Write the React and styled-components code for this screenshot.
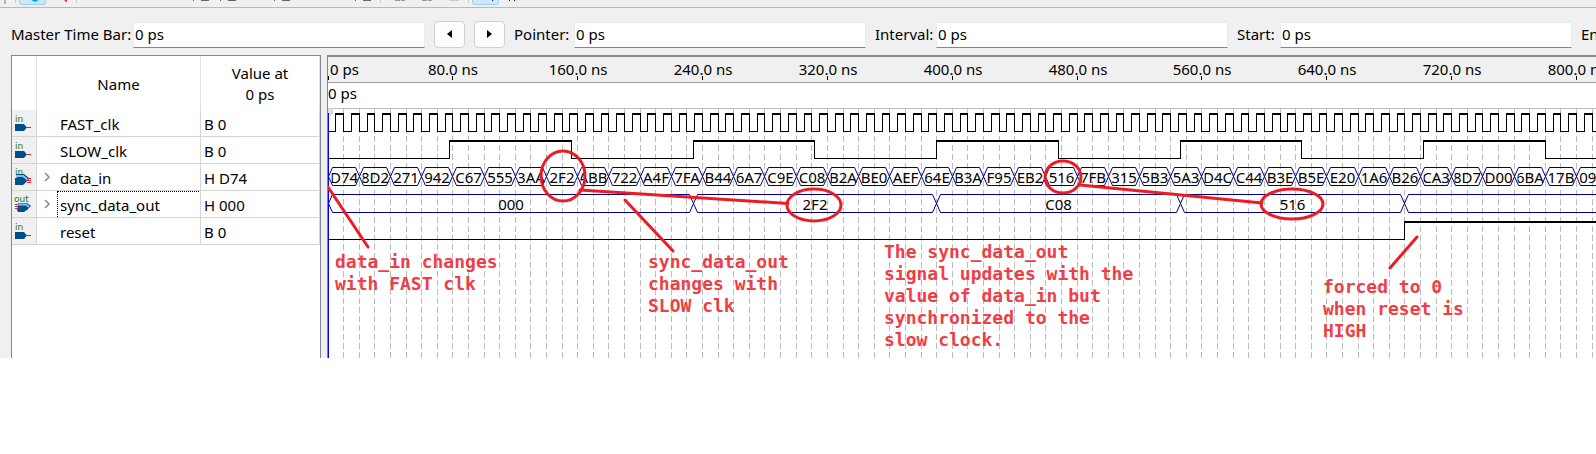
import React from "react";
import styled, { createGlobalStyle } from "styled-components";

const GlobalStyle = createGlobalStyle`
  * { box-sizing: border-box; }
  body {
    margin: 0;
    background: #fff;
    color: #000;
    font: 15px/21px "Noto Sans", "Open Sans", sans-serif;
  }
`;

/* ---------- page frame ---------- */

const Window = styled.main`
  background: #f0f0f0;
  overflow: hidden;
`;

const Toolbar = styled.div`
  display: flex;
  height: 8px;
  padding-left: 4px;
  border-bottom: 1px solid #b9b9b9;
  overflow: hidden;
`;

const Grip = styled.span`
  flex: none;
  width: 2px;
  height: 4px;
  margin-right: 6px;
  background: #b8b8b8;
`;

const Separator = styled.span`
  flex: none;
  width: 1px;
  height: 3px;
  margin: 0 3px;
  background: #c8c8c8;
`;

const ToolButton = styled.button`
  flex: none;
  width: 27px;
  height: 5px;
  padding: 0;
  border: 1px solid ${(p) => (p.$active ? "#99d1ff" : "transparent")};
  border-top: 0;
  border-radius: 0 0 3px 3px;
  background: ${(p) => (p.$active ? "#cce8ff" : "transparent")};
  svg { display: block; }
`;

const TimeBar = styled.form`
  display: flex;
  align-items: center;
  gap: 9px;
  height: 47px;
  padding: 6px 0 0 11px;
`;

const Field = styled.div`
  display: flex;
  flex: none;
  align-items: center;
`;

const FieldLabel = styled.label`
  width: ${(p) => p.$width}px;
  white-space: nowrap;
`;

const TimeInput = styled.input`
  width: 292px;
  height: 26px;
  padding: 0 1px 1px;
  border: 1px solid #ebebeb;
  border-bottom-color: #868686;
  border-radius: 1px;
  background: #fff;
  font: inherit;
`;

const StepButton = styled.button`
  flex: none;
  display: grid;
  place-items: center;
  width: 31px;
  height: 27px;
  padding: 0 0 2px;
  border: 1px solid #d0d0d0;
  border-radius: 4px;
  background: #fdfdfd;
`;

const Workspace = styled.div`
  display: flex;
  gap: 6px;
  padding-left: 11px;
`;

/* ---------- signal table ---------- */

const SignalPanel = styled.section`
  flex: none;
  width: 310px;
  border: 1px solid #828790;
  border-bottom: 0;
  background: #fff;
`;

const SignalTable = styled.table`
  width: 100%;
  table-layout: fixed;
  border-collapse: separate;
  border-spacing: 0;
`;

const HeadCell = styled.th`
  width: ${(p) => p.$width}px;
  height: 54px;
  padding: 2px 0 0;
  border-right: 1px solid #e2e2e2;
  font-weight: 400;
`;

const Cell = styled.td`
  height: 27px;
  padding: 0 0 0 ${(p) => p.$indent || 0}px;
  border-right: 1px solid #d5d5d5;
  border-bottom: 1px solid #d5d5d5;
  background: ${(p) => (p.$shaded ? "#f0f0f0" : "#fff")};
  white-space: nowrap;
  svg { display: block; }
`;

const NameLine = styled.div`
  display: flex;
  align-items: center;
`;

const Expander = styled.button`
  display: grid;
  place-items: center;
  width: 14px;
  height: 20px;
  margin: 0 3px;
  padding: 0;
  border: 0;
  background: none;
`;

const SignalName = styled.span`
  flex: 1;
  height: 26px;
  margin-right: 1px;
  padding: 3px 0 0 2px;
  border: 1px dotted transparent;
  border-width: 1px 0 0 1px;
  ${(p) => p.$focused && "border-color: #000;"}
`;

const Spacer = styled.span`
  width: 20px;
`;

const Value = styled.div`
  padding-top: 3px;
`;

/* ---------- waveform ---------- */

const WavePanel = styled.section`
  flex: 1;
  min-width: 0;
  border-left: 1px solid #828790;
  background: #fff;
`;

const Ruler = styled.svg`
  display: block;
  width: 100%;
  height: 28px;
  border-top: 2px solid #8a8b96;
  border-bottom: 1px solid #a0a0a5;
  background: #f0f0f0;
`;

const CursorTime = styled.div`
  height: 25px;
  line-height: 20px;
`;

const Plot = styled.div`
  position: relative;
  height: 250px;
  overflow: hidden;
`;

const Layer = styled.svg`
  display: block;
  position: absolute;
  inset: 0;
  width: 100%;
  height: 100%;
`;

const Note = styled.p`
  position: absolute;
  left: ${(p) => p.$x}px;
  top: ${(p) => p.$y}px;
  margin: 0;
  color: #ef3e46;
  font: bold 18px/22px "DejaVu Sans Mono", "Liberation Mono", monospace;
  white-space: pre;
`;

const PX_PER_NS = 1.5607;
const END_NS = 1600;
const at = (ns) => Math.floor(ns * PX_PER_NS);

const clockPaths = (half, high, low) => {
  let lows = "";
  let highs = "";
  let edges = "";
  for (let t = 0; t < END_NS; t += 2 * half) {
    const a = at(t);
    const b = at(t + half);
    const c = at(t + 2 * half);
    lows += `M${a} ${low + 0.5}H${b + 1}`;
    highs += `M${b} ${high + 1}H${c + 1}`;
    edges += `M${b + 0.5} ${high}V${low + 1}M${c + 0.5} ${high}V${low + 1}`;
  }
  return { thin: lows + edges, thick: highs };
};

const Clock = ({ half, high, low }) => {
  const { thin, thick } = clockPaths(half, high, low);
  return (
    <g stroke="#000" fill="none" shapeRendering="crispEdges">
      <path d={thin} />
      <path d={thick} strokeWidth="2" />
    </g>
  );
};

const Bus = ({ id, segments, top }) => (
  <g>
    {segments.map(([from, to, text], i) => {
      const a = at(from) + 0.5;
      const b = at(to) + 0.5;
      const y0 = top + 0.5;
      const y1 = top + 18.5;
      const mid = top + 9.5;
      return (
        <g key={from}>
          <clipPath id={`${id}${i}`}>
            <rect x={a + 3} y={top} width={b - a - 5} height="19" />
          </clipPath>
          <path
            d={`M${a} ${mid}L${a + 4} ${y0}H${b - 4}L${b} ${mid}L${b - 4} ${y1}H${a + 4}Z`}
            fill="none"
            stroke="#000080"
          />
          <text x={(a + b) / 2} y={top + 16} textAnchor="middle" fontSize="15" clipPath={`url(#${id}${i})`}>
            {text}
          </text>
        </g>
      );
    })}
  </g>
);

const DATA_IN = (
  "D74 8D2 271 942 C67 555 3AA 2F2 ABB 722 A4F 7FA B44 6A7 C9E C08 B2A BE0 AEF 64E B3A " +
  "F95 EB2 516 7FB 315 5B3 5A3 D4C C44 B3E B5E E20 1A6 B26 CA3 8D7 D00 6BA 17B 090"
)
  .split(" ")
  .map((v, i) => [i * 20, i * 20 + 20, v]);

const DATA_OUT = [
  [0, 234, "000"],
  [234, 390, "2F2"],
  [390, 546, "C08"],
  [546, 690, "516"],
  [690, END_NS, ""],
];

const NOTES = [
  { x: 7, y: 143, text: "data_in changes\nwith FAST clk" },
  { x: 320, y: 143, text: "sync_data_out\nchanges with\nSLOW clk" },
  {
    x: 556,
    y: 133,
    text: "The sync_data_out\nsignal updates with the\nvalue of data_in but\nsynchronized to the\nslow clock.",
  },
  { x: 995, y: 168, text: "forced to 0\nwhen reset is\nHIGH" },
];

const gridLines = Array.from({ length: END_NS / 10 }, (_, i) => (i + 1) * 10);
const rulerTimes = Array.from({ length: END_NS / 80 }, (_, i) => (i + 1) * 80);

const Waveform = () => (
  <WavePanel aria-label="Waveform">
    <Ruler>
      <text x="2" y="18" fontSize="15">0 ps</text>
      <path d="M.5 19v4" stroke="#000" />
      {rulerTimes.map((t) => (
        <g key={t}>
          <text x={at(t) + 1} y="18" fontSize="15" textAnchor="middle">{`${t}.0 ns`}</text>
          <path d={`M${at(t) + 0.5} 19v4`} stroke="#000" />
        </g>
      ))}
    </Ruler>
    <CursorTime>0 ps</CursorTime>
    <Plot>
      <Layer>
        <path d="M5 .5H4000" stroke="#bdbdbd" />
        <g stroke="#bdbdbd" strokeDasharray="6 3" shapeRendering="crispEdges">
          {gridLines.map((t) => (
            <path key={t} d={`M${at(t) + 0.5} 1V250`} />
          ))}
        </g>
        <path d="M0 0h4v6h-4z" fill="#ececec" stroke="#b5b5b5" />
        <Clock half={5} high={5} low={23} />
        <Clock half={78} high={32} low={50} />
        <Bus id="in" segments={DATA_IN} top={59} />
        <Bus id="out" segments={DATA_OUT} top={86} />
        <g stroke="#000" fill="none" shapeRendering="crispEdges">
          <path d={`M0 131.5H${at(690) + 0.5}V114`} />
          <path d={`M${at(690)} 114H4000`} strokeWidth="2" />
        </g>
        <path d="M.5 5V250" stroke="#00f" />
      </Layer>
      {NOTES.map((n) => (
        <Note key={n.text} $x={n.x} $y={n.y}>{n.text}</Note>
      ))}
      <Layer fill="none" stroke="#ed1c24" strokeWidth="3" strokeLinecap="round" aria-hidden="true">
        <ellipse cx="235" cy="68" rx="22" ry="25" />
        <ellipse cx="486" cy="97" rx="27" ry="16" />
        <ellipse cx="735" cy="69" rx="18" ry="16" />
        <ellipse cx="964" cy="96" rx="31" ry="15" />
        <path d="M252 82L460 95.500M752 77L934 95M0 79L40 139M297 92L345 143M1089 129L1062 160" />
      </Layer>
    </Plot>
  </WavePanel>
);

/* ---------- icons ---------- */

const PinIcon = ({ kind }) => (
  <svg width="20" height="26" viewBox="0 0 20 26" fontFamily="DejaVu Sans" aria-hidden="true">
    <text x={kind === "out" ? 2 : 3} y={kind === "in" ? 12 : 11} fontSize="9" fill="#1f761f">
      {kind === "out" ? "out" : "in"}
    </text>
    {kind === "in" && (
      <>
        <path d="M3 14H12L15 17.500L12 21H3Z" fill="#004f8a" />
        <path d="M15 17.500H19" stroke="#ed1c24" />
      </>
    )}
    {kind === "bus" && (
      <>
        <path d="M4 10H12L17 14V17H10L4 13Z" fill="#004f8a" />
        <path d="M4 12H11L16 16" fill="none" stroke="#7cc4f2" strokeWidth="2" />
        <path d="M3 14H10L15 17.500L11 21H3Z" fill="#004f8a" />
        <path d="M15 14.500H19M15 16.500H19M15 18.500H19" stroke="#ed1c24" />
      </>
    )}
    {kind === "out" && (
      <>
        <path d="M6 12H15L19 15L15 19H6Z" fill="#004f8a" />
        <path d="M6 13.500H14L17 16" fill="none" stroke="#7cc4f2" strokeWidth="2" />
        <path d="M5 15H12L16 18L12 21H6L5 19L6 17Z" fill="#004f8a" />
        <path d="M3 13.500H6M3 15.500H6M3 17.500H6" stroke="#ed1c24" />
      </>
    )}
  </svg>
);

const SIGNALS = [
  { name: "FAST_clk", value: "B 0", kind: "in" },
  { name: "SLOW_clk", value: "B 0", kind: "in" },
  { name: "data_in", value: "H D74", kind: "bus", group: true },
  { name: "sync_data_out", value: "H 000", kind: "out", group: true, focused: true },
  { name: "reset", value: "B 0", kind: "in" },
];

const Signals = () => (
  <SignalPanel>
    <SignalTable>
      <thead>
        <tr>
          <HeadCell $width={25} aria-label="Direction" />
          <HeadCell $width={164}>Name</HeadCell>
          <HeadCell $width={119}>Value at<br />0 ps</HeadCell>
        </tr>
      </thead>
      <tbody>
        {SIGNALS.map((s) => (
          <tr key={s.name}>
            <Cell $shaded><PinIcon kind={s.kind} /></Cell>
            <Cell>
              <NameLine>
                {s.group ? (
                  <Expander type="button" aria-label={`Expand ${s.name}`}>
                    <svg width="7" height="10" viewBox="0 0 7 10">
                      <path d="M1 1L5 5L1 9" fill="none" stroke="#8a8a8a" strokeWidth="1.500" />
                    </svg>
                  </Expander>
                ) : (
                  <Spacer />
                )}
                <SignalName $focused={s.focused}>{s.name}</SignalName>
              </NameLine>
            </Cell>
            <Cell $indent={3}><Value>{s.value}</Value></Cell>
          </tr>
        ))}
      </tbody>
    </SignalTable>
  </SignalPanel>
);

/* ---------- toolbar ---------- */

const GLYPHS = {
  cyan: <path d="M11 0h8l-4 2z" fill="#00a2e8" />,
  red: <path d="M17 0h3v2h-1z" fill="#d2451e" />,
  edge: <path d="M4 0h1v1h-1zM12 0h8v1h-8z" fill="#666" />,
  dim: <path d="M10 0h5v1h-5zM16 0h4v1h-4z" fill="#999" />,
  faint: <path d="M10 0h10v1h-10z" fill="#ccc" />,
  blue: <path d="M19 0h1v1h-1z" fill="#00f" />,
  wave: <path d="M9 0h1v1h-1zM14 0h1v1h-1z" fill="#00f" />,
};

const TOOLS = [
  ["cyan", "red"],
  ["", "", "", "", "edge", "edge", "", "edge", "", "", "edge"],
  ["dim", "dim", "faint"],
  ["blue", "wave"],
];

const Tools = () => (
  <Toolbar role="toolbar" aria-label="Tools">
    <Grip />
    {TOOLS.map((group, g) => (
      <React.Fragment key={g}>
        <Separator />
        {group.map((glyph, i) => (
          <ToolButton key={i} type="button" aria-label={`Tool ${g + 1}.${i + 1}`} $active={glyph === "cyan" || glyph === "blue"}>
            <svg width="25" height="4">{GLYPHS[glyph]}</svg>
          </ToolButton>
        ))}
      </React.Fragment>
    ))}
  </Toolbar>
);

const TimeField = ({ id, label, width }) => (
  <Field>
    <FieldLabel htmlFor={id} $width={width}>{label}</FieldLabel>
    <TimeInput id={id} defaultValue="0 ps" />
  </Field>
);

export default function App() {
  return (
    <>
      <GlobalStyle />
      <Window>
        <Tools />
        <TimeBar>
          <TimeField id="master" label="Master Time Bar:" width={122} />
          <StepButton type="button" aria-label="Previous">
            <svg width="5" height="8"><path d="M5 0V8L0 4Z" /></svg>
          </StepButton>
          <StepButton type="button" aria-label="Next">
            <svg width="5" height="8"><path d="M0 0V8L5 4Z" /></svg>
          </StepButton>
          <TimeField id="pointer" label="Pointer:" width={60} />
          <TimeField id="interval" label="Interval:" width={61} />
          <TimeField id="start" label="Start:" width={43} />
          <TimeField id="end" label="End:" width={40} />
        </TimeBar>
        <Workspace>
          <Signals />
          <Waveform />
        </Workspace>
      </Window>
    </>
  );
}
